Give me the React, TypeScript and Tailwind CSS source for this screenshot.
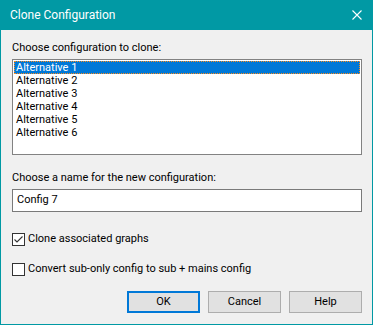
import React from "react";

const items = ["Alternative 1", "Alternative 2", "Alternative 3", "Alternative 4", "Alternative 5", "Alternative 6"];

function CheckBox({ checked }: { checked: boolean }) {
  return (
    <div className="w-[13px] h-[13px] border border-[#333333] bg-white flex items-center justify-center shrink-0">
      {checked && (
        <svg width="11" height="11" viewBox="0 0 11 11">
          <path d="M1.5 5.5 L4 8 L9.5 2.5" fill="none" stroke="#333333" strokeWidth="1.1" />
        </svg>
      )}
    </div>
  );
}

export default function App() {
  return (
    <div className="w-[373px] h-[325px] bg-[#0199a4] flex flex-col text-[11px] text-black font-[family-name:Roboto,sans-serif]">
      <div className="h-[30px] shrink-0 flex items-center justify-between pl-[10px] pr-[11px] text-white">
        <span className="text-[12px] leading-[16px]">Clone Configuration</span>
        <svg width="10" height="10" viewBox="0 0 10 10">
          <path d="M0.5 0.5 L9.5 9.5 M9.5 0.5 L0.5 9.5" stroke="white" strokeWidth="1.1" />
        </svg>
      </div>
      <div className="flex-1 mx-[1px] mb-[1px] bg-[#f0f0f0] flex flex-col pl-[11px] pr-[10px] pt-[10px]">
        <div className="leading-[16px] h-[16px]">Choose configuration to clone:</div>
        <div className="mt-[3px] h-[96px] border border-[#828282] bg-white p-[1px] flex flex-col">
          {items.map((t, i) => (
            <div
              key={t}
              className={
                i === 0
                  ? "h-[13px] leading-[13px] pl-[2px] bg-[#0078d7] text-white outline-1 outline-dotted outline-[#ff8c1a] -outline-offset-1"
                  : "h-[13px] leading-[13px] pl-[2px]"
              }
            >
              {t}
            </div>
          ))}
        </div>
        <div className="mt-[15px] leading-[16px] h-[16px]">Choose a name for the new configuration:</div>
        <div className="mt-[3px] h-[23px] border border-[#7a7a7a] bg-white flex items-center pl-[4px]">Config 7</div>
        <div className="mt-[19px] h-[16px] flex items-center gap-[3px]">
          <CheckBox checked />
          <span className="leading-[16px]">Clone associated graphs</span>
        </div>
        <div className="mt-[14px] h-[16px] flex items-center gap-[3px]">
          <CheckBox checked={false} />
          <span className="leading-[16px]">Convert sub-only config to sub + mains config</span>
        </div>
        <div className="mt-[14px] flex justify-end gap-[8px]">
          <button className="w-[73px] h-[22px] border-2 border-[#0078d7] bg-[#e1e1e1] text-[11px]">OK</button>
          <button className="w-[73px] h-[22px] border border-[#adadad] bg-[#e1e1e1] text-[11px]">Cancel</button>
          <button className="w-[73px] h-[22px] border border-[#adadad] bg-[#e1e1e1] text-[11px]">Help</button>
        </div>
      </div>
    </div>
  );
}
